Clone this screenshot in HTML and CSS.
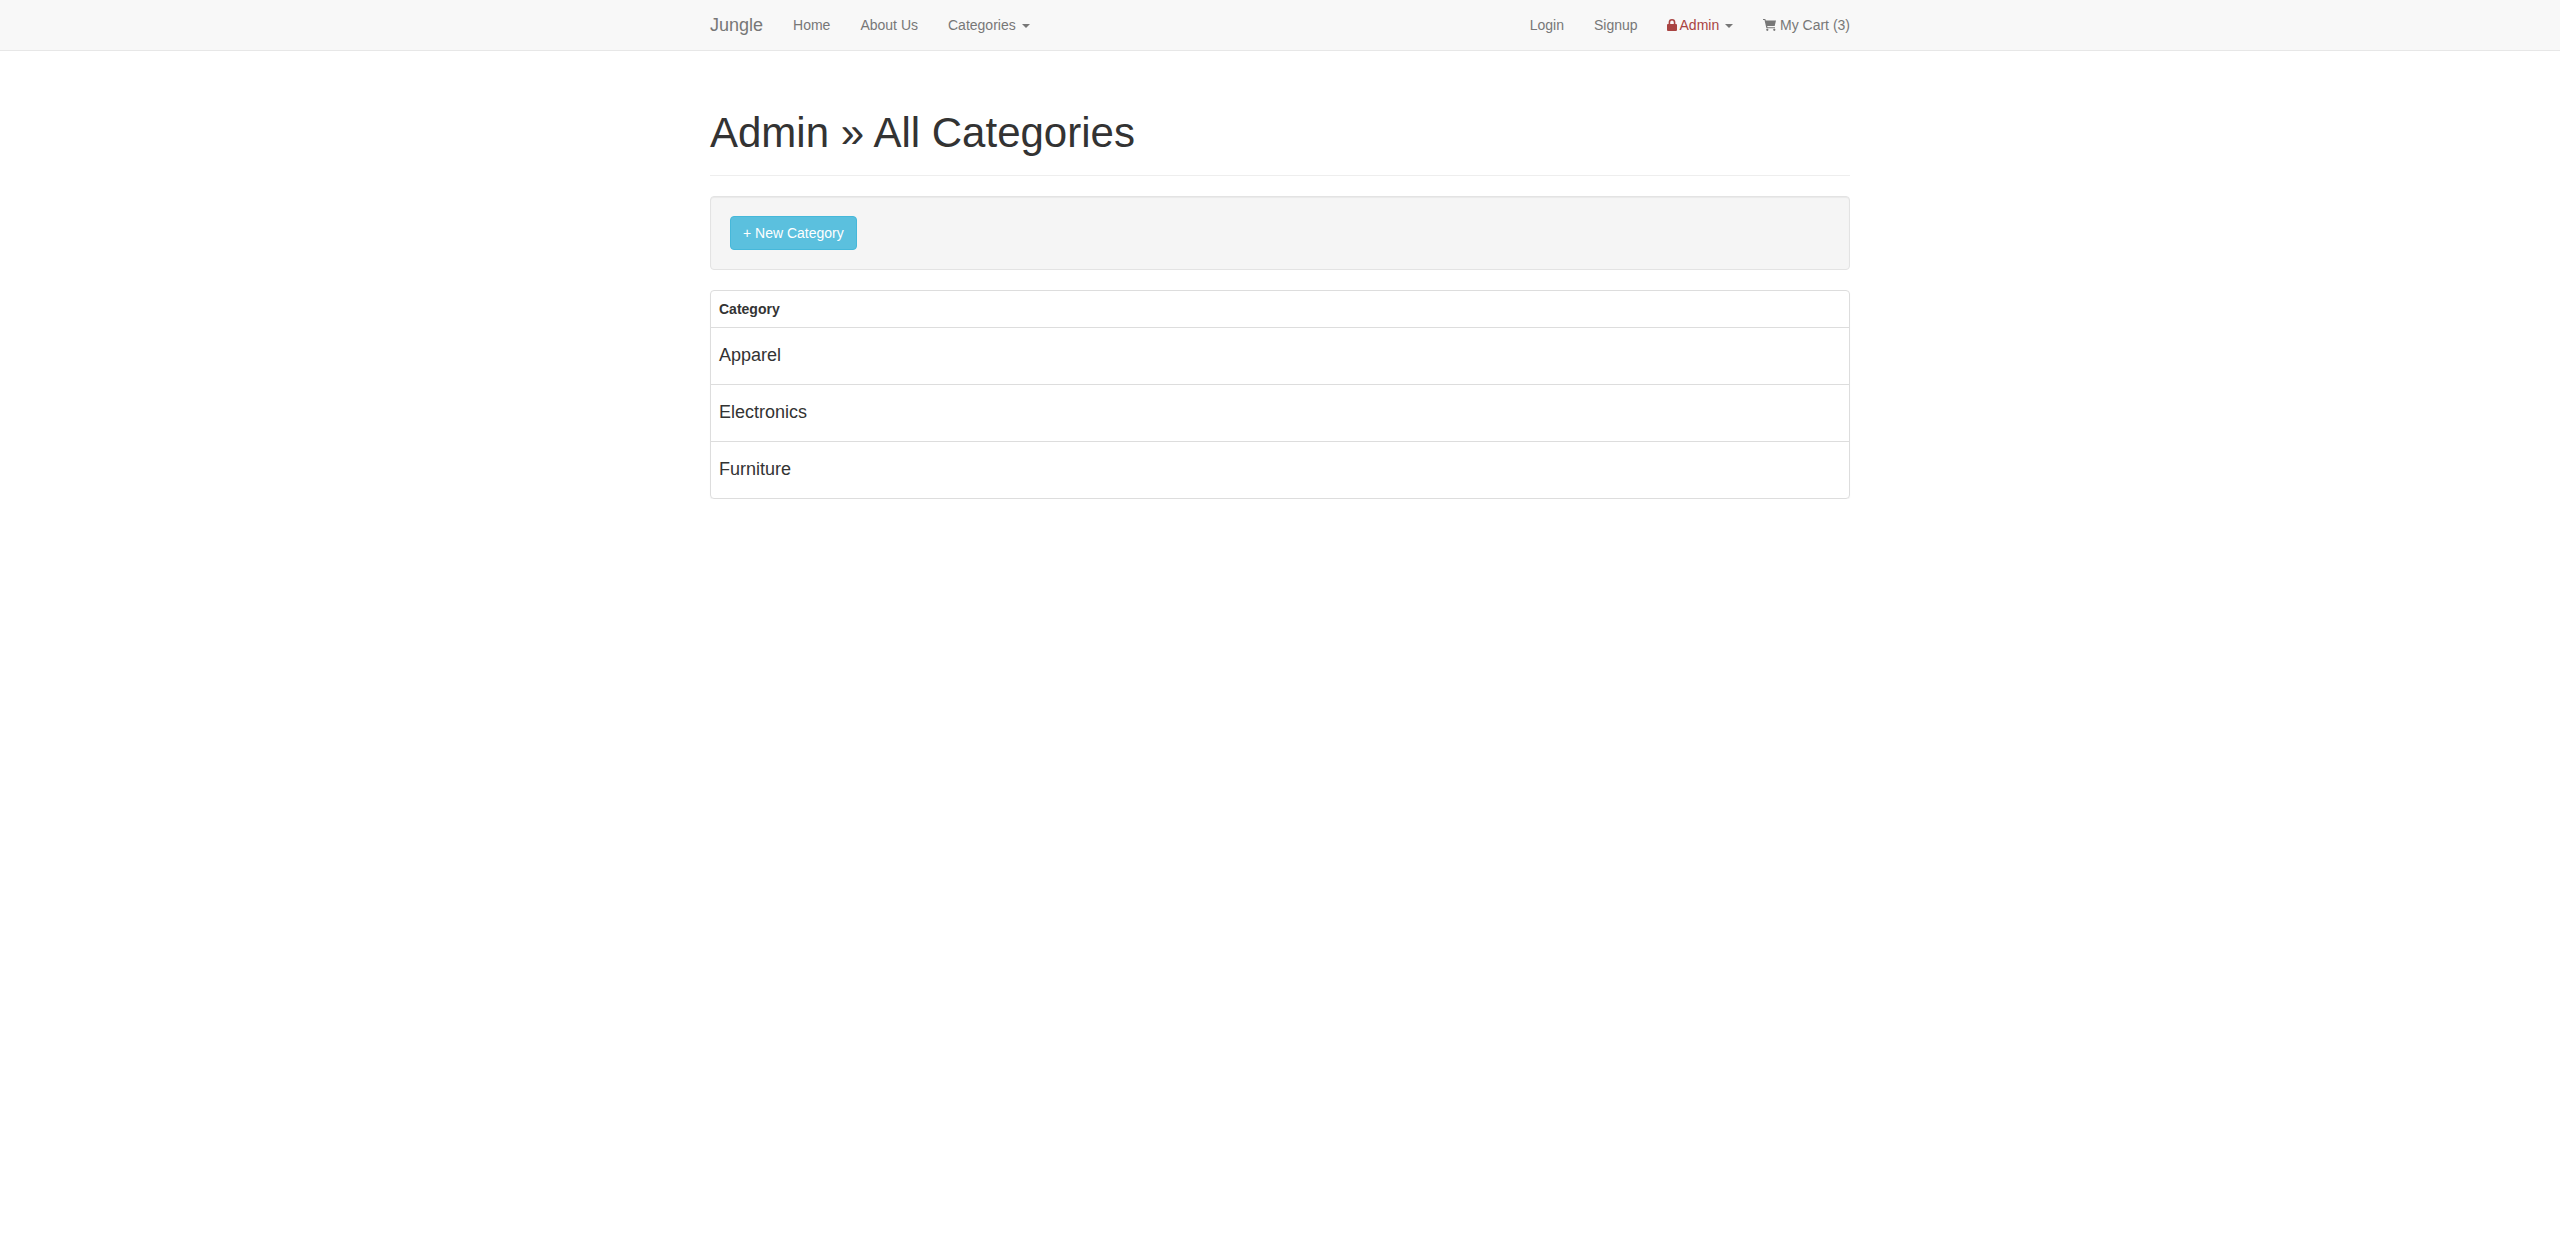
FILE: index.html
```html
<!DOCTYPE html>
<html lang="en">
<head>
<meta charset="utf-8">
<title>Jungle</title>
<link rel="stylesheet" href="styles.css">
</head>
<body>
<nav class="navbar">
  <div class="container navbar-inner">
    <div class="nav-group">
      <a class="brand" href="#">Jungle</a>
      <a class="nav-link" href="#">Home</a>
      <a class="nav-link" href="#">About Us</a>
      <a class="nav-link" href="#">Categories <span class="caret"></span></a>
    </div>
    <div class="nav-group nav-right">
      <a class="nav-link" href="#">Login</a>
      <a class="nav-link" href="#">Signup</a>
      <a class="nav-link nav-admin" href="#"><span class="danger"><svg class="icon" viewBox="0 0 10 12" aria-hidden="true"><path fill="currentColor" d="M1.600 5V3.400a3.400 3.400 0 0 1 6.800 0V5h.7c.5 0 .9.400.9.900v5.200c0 .5-.4.900-.9.900H.9c-.5 0-.9-.4-.9-.9V5.900C0 5.400.4 5 .9 5h.7zm1.600 0h3.600V3.400a1.800 1.800 0 0 0-3.600 0V5z"/></svg>Admin</span> <span class="caret"></span></a>
      <a class="nav-link" href="#"><svg class="icon cart" viewBox="0 0 13 12" aria-hidden="true"><path fill="currentColor" d="M0 0h2.300l.5 1.500H13l-1.300 5.500H4.200l.3 1.300H12v1H3.400L1.500 1H0zM4.300 9.700a1.150 1.150 0 1 1 0 2.300 1.150 1.150 0 0 1 0-2.300zm7 0a1.150 1.150 0 1 1 0 2.300 1.150 1.150 0 0 1 0-2.300z"/></svg> My Cart (3)</a>
    </div>
  </div>
</nav>
<main class="container">
  <header class="page-header"><h1>Admin » All Categories</h1></header>
  <section class="well"><a class="btn" href="#">+ New Category</a></section>
  <table class="categories">
    <thead><tr><th>Category</th></tr></thead>
    <tbody>
      <tr><td>Apparel</td></tr>
      <tr><td>Electronics</td></tr>
      <tr><td>Furniture</td></tr>
    </tbody>
  </table>
</main>
</body>
</html>
```
FILE: styles.css
```css
* { box-sizing: border-box; }
body {
  margin: 0;
  background: #fff;
  color: #333;
  font-family: "Liberation Sans", Arial, sans-serif;
  font-size: 14px;
  line-height: 20px;
}
a { text-decoration: none; }
.container { width: 1140px; margin: 0 auto; }
.navbar {
  height: 51px;
  background: #f8f8f8;
  border-bottom: 1px solid #e7e7e7;
}
.navbar-inner { display: flex; justify-content: space-between; }
.nav-group { display: flex; gap: 30px; align-items: center; height: 50px; }
.brand { color: #777; font-size: 18px; }
.nav-link { color: #777; }
.nav-admin { margin-left: -1px; }
.danger { color: #a94442; }
.caret {
  display: inline-block;
  width: 0;
  height: 0;
  margin-left: 2px;
  vertical-align: middle;
  border-top: 4px solid #777;
  border-left: 4px solid transparent;
  border-right: 4px solid transparent;
}
.icon { width: 10px; height: 12px; margin-right: 3px; vertical-align: -1px; }
.icon.cart { width: 13px; height: 12px; margin-right: 0; vertical-align: -1px; }
.page-header {
  padding-top: 55px;
  padding-bottom: 9px;
  margin-bottom: 20px;
  border-bottom: 1px solid #eee;
}
h1 {
  margin: 0 0 10px;
  padding-top: 4px;
  font-size: 42px;
  font-weight: 500;
  line-height: 46px;
  color: #333;
}
.well {
  padding: 19px;
  margin-bottom: 20px;
  background: #f5f5f5;
  border: 1px solid #e3e3e3;
  border-radius: 4px;
  box-shadow: inset 0 1px 1px rgba(0,0,0,.05);
}
.btn {
  display: inline-block;
  padding: 6px 12px;
  color: #fff;
  background: #5bc0de;
  border: 1px solid #46b8da;
  border-radius: 4px;
}
.categories {
  width: 100%;
  border-collapse: separate;
  border-spacing: 0;
  border: 1px solid #ddd;
  border-radius: 4px;
  box-shadow: 0 1px 1px rgba(0,0,0,.05);
}
.categories th, .categories td { text-align: left; padding: 8px; }
.categories th { font-weight: 700; line-height: 20px; }
.categories td {
  padding: 7px 8px 9px;
  font-size: 18px;
  line-height: 40px;
  border-top: 1px solid #ddd;
}
```
